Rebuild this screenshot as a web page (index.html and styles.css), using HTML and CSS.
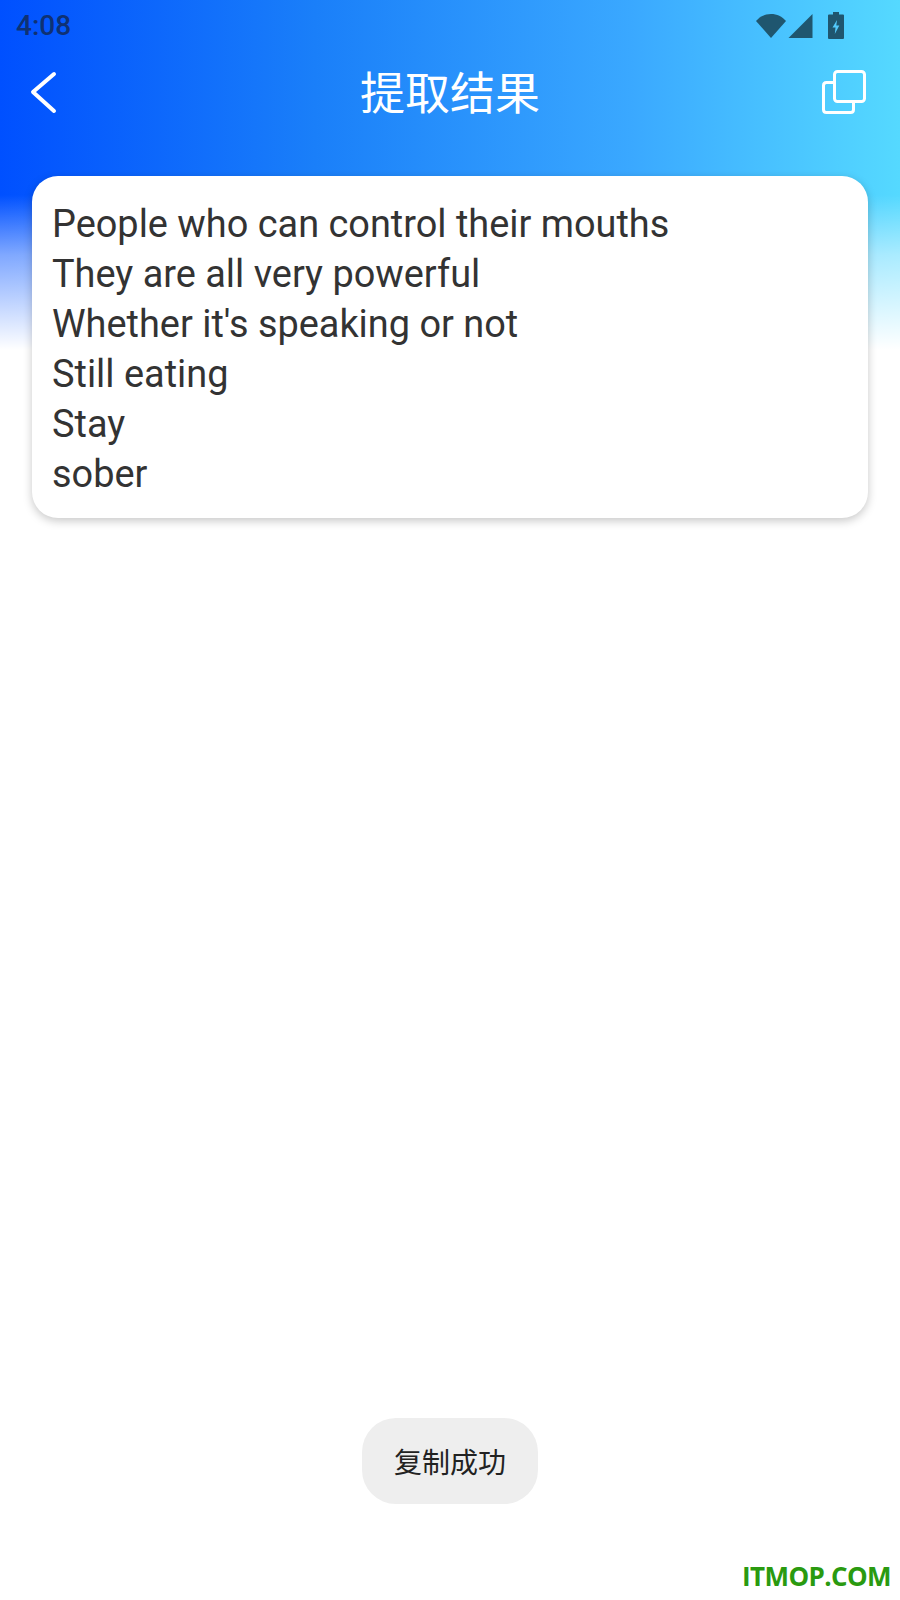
FILE: index.html
```html
<!DOCTYPE html>
<html lang="zh-CN">
<head>
  <meta charset="UTF-8">
  <meta name="viewport" content="width=device-width, initial-scale=1.0">
  <title>提取结果</title>
  <link rel="stylesheet" href="styles.css">
</head>
<body>
  <div id="page">
    <div class="status-bar">
      <span class="status-time">4:08</span>
      <div class="status-icons">
        <svg class="icon-wifi" width="30" height="25" viewBox="0 0 30 25"><path d="M0 8C4 3.500 9 1 15 1S26 3.500 30 8L15 25Z" fill="#1f566f"/></svg>
        <svg class="icon-signal" width="25" height="25" viewBox="0 0 25 25"><path d="M24.500 1V25H0.500Z" fill="#1f566f"/></svg>
        <svg class="icon-battery" width="16" height="27" viewBox="0 0 16 27"><path d="M5 0H11V2.500H15Q16 2.500 16 3.500V26Q16 27 15 27H1Q0 27 0 26V3.500Q0 2.500 1 2.500H5Z" fill="#1f566f"/><path d="M9 8L4.500 15.500H7.500L6.800 22L11.300 13.500H8.300Z" fill="#53c9fb"/></svg>
      </div>
    </div>
    <div class="nav-bar">
      <button class="nav-back">
        <svg width="30" height="44" viewBox="0 0 30 44"><path d="M25 4L4 22L25 41" fill="none" stroke="#fff" stroke-width="4" stroke-linecap="round" stroke-linejoin="round"/></svg>
      </button>
      <h1 class="nav-title">提取结果</h1>
      <button class="nav-copy">
        <svg width="44" height="44" viewBox="0 0 44 44" fill="none" stroke="#fff" stroke-width="3"><rect x="12.500" y="1.500" width="30" height="30" rx="3"/><path d="M12.500 12.500H4.500Q1.500 12.500 1.500 15.500V39.500Q1.500 42.500 4.500 42.500H28.500Q31.500 42.500 31.500 39.500V31.500" stroke-linecap="round"/></svg>
      </button>
    </div>
    <div class="result-card">
      <p>People who can control their mouths</p>
      <p>They are all very powerful</p>
      <p>Whether it's speaking or not</p>
      <p>Still eating</p>
      <p>Stay</p>
      <p>sober</p>
    </div>
  </div>
  <div class="toast">复制成功</div>
  <div class="watermark">ITMOP.COM</div>
</body>
</html>
```

FILE: styles.css
```css
html, body {
  margin: 0;
  background: #fff;
}

body {
  position: relative;
  width: 900px;
  height: 1600px;
  overflow: hidden;
  font-family: Roboto, "Noto Sans CJK SC", sans-serif;
}

#page {
  height: 100%;
  background:
    linear-gradient(to bottom, rgba(255,255,255,0) 195px, rgba(255,255,255,0.5) 255px, #fff 350px) no-repeat,
    linear-gradient(to right, #0050ff 0%, #1a7ff9 35%, #3aa8ff 70%, #55d9ff 100%) no-repeat;
  background-size: 100% 350px;
}

.status-bar {
  height: 50px;
  display: flex;
  justify-content: space-between;
  align-items: center;
  padding: 0 56px 0 16px;
}

.status-time {
  font-size: 28px;
  font-weight: 500;
  color: #0f3173;
}

.status-icons {
  display: flex;
  align-items: center;
  gap: 2px;
}

.icon-battery {
  margin-left: 13px;
}

.nav-bar {
  height: 84px;
  display: grid;
  grid-template-columns: 1fr auto 1fr;
  align-items: center;
  padding: 0 34px;
}

.nav-bar button {
  background: none;
  border: none;
  padding: 0;
  display: flex;
}

.nav-back {
  margin-left: -5px;
}

.nav-copy {
  justify-self: end;
}

.nav-title {
  margin: 0;
  padding-bottom: 4px;
  font-size: 45px;
  font-weight: 400;
  color: #fff;
}

.result-card {
  margin: 42px 32px 0;
  padding: 23px 20px 19px;
  background: #fff;
  border-radius: 26px;
  box-shadow: 0 3px 10px rgba(0,0,0,0.22);
}

.result-card p {
  margin: 0;
  font-size: 37.9px;
  line-height: 50px;
  color: #333;
}

.toast {
  position: absolute;
  left: 362px;
  top: 1418px;
  width: 176px;
  height: 86px;
  display: flex;
  justify-content: center;
  align-items: center;
  background: #eee;
  border-radius: 34px;
  font-size: 28px;
  color: #222;
}

.watermark {
  position: absolute;
  right: 9px;
  top: 1558px;
  font-family: "Open Sans", sans-serif;
  font-size: 26px;
  font-weight: 700;
  letter-spacing: -0.6px;
  color: #2a9a10;
}
```
